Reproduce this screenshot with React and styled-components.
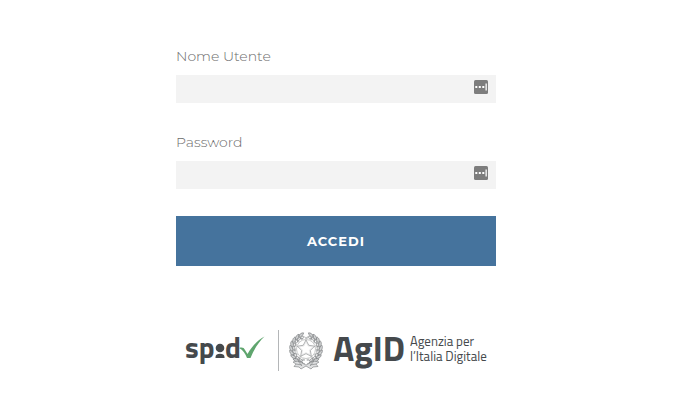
import React from 'react';
import styled, { createGlobalStyle, ThemeProvider } from 'styled-components';

const theme = {
  colors: {
    primary: '#45739d',
    field: '#f3f3f3',
    label: '#6c6c6c',
    ink: '#45494c',
    line: '#b4b6b8',
  },
};

const GlobalStyle = createGlobalStyle`
  * {
    box-sizing: border-box;
  }

  body {
    margin: 0;
    background: #fff;
    font-family: Montserrat, Inter, sans-serif;
  }
`;

const StdPage = styled.main`
  display: flex;
  flex-direction: column;
  align-items: center;
  padding: 46px 17px 28px 16px;
`;

const StdForm = styled.form`
  display: flex;
  flex-direction: column;
  width: 100%;
  max-width: 320px;
`;

const StdField = styled.div`
  margin-bottom: ${(props) => (props.$last ? '27px' : '29px')};
`;

const StdLabel = styled.label`
  display: block;
  margin-bottom: 9px;
  font-size: 14px;
  font-weight: 300;
  line-height: 20px;
  color: ${(props) => props.theme.colors.label};
`;

const StdInputHolder = styled.div`
  display: flex;
  align-items: flex-start;
  height: 28px;
  padding-right: 8px;
  background-color: ${(props) => props.theme.colors.field};
`;

const StdInput = styled.input`
  flex: 1;
  min-width: 0;
  height: 28px;
  padding: 0 8px;
  border: 0;
  background: transparent;
  font: inherit;
  font-size: 14px;
`;

const StdFillIcon = styled.svg`
  width: 14px;
  height: 14px;
  margin-top: 5px;
`;

const StdButton = styled.button`
  height: 50px;
  border: 0;
  background-color: ${(props) => props.theme.colors.primary};
  color: #fff;
  font-family: inherit;
  font-size: 13px;
  font-weight: 700;
  letter-spacing: 1px;
  text-transform: uppercase;
  cursor: pointer;
`;

const StdLogos = styled.footer`
  display: flex;
  align-items: flex-start;
  margin-top: 64px;
  height: 41px;
  color: ${(props) => props.theme.colors.ink};
  font-family: 'Titillium Web', Roboto, sans-serif;
`;

const StdSpid = styled.svg`
  width: 80px;
  height: 41px;
  margin-right: 13px;
  fill: currentColor;
  overflow: visible;
`;

const StdDivider = styled.span`
  width: 1px;
  height: 41px;
  margin-right: 10px;
  background-color: ${(props) => props.theme.colors.line};
`;

const StdEmblem = styled.svg`
  width: 34px;
  height: 39px;
  margin: 1px 10px 0 0;
`;

const StdAcronym = styled.span`
  margin-right: 5px;
  font-size: 35px;
  font-weight: 700;
  line-height: 36px;
`;

const StdAgency = styled.span`
  padding-top: 4px;
  font-size: 13px;
  line-height: 15px;
  white-space: nowrap;
`;

const FillIcon = () => (
  <StdFillIcon viewBox='0 0 14 14' aria-hidden='true'>
    <rect width='14' height='14' rx='1.5' fill='#7d7d7d' />
    <path d='M1.300 6h2v2h-2zM4.800 6h2v2h-2zM8.300 6h2v2h-2zM11.500 3.500h1.300v7h-1.300z' fill='#fff' />
  </StdFillIcon>
);

const Field = ({ id, label, type, last }) => (
  <StdField $last={last}>
    <StdLabel htmlFor={id}>{label}</StdLabel>
    <StdInputHolder>
      <StdInput id={id} name={id} type={type} />
      <FillIcon />
    </StdInputHolder>
  </StdField>
);

const SpidLogo = () => (
  <StdSpid viewBox='0 0 80 41' role='img' aria-label='spid'>
    <g fontFamily="'Titillium Web', Roboto, sans-serif" fontSize='29' fontWeight='700'>
      <text x='0' y='28'>sp</text>
      <text x='40' y='28'>d</text>
    </g>
    <circle cx='35' cy='18' r='4.300' />
    <path d='M30.500 28v-1c0-2.300 2-3.300 4.500-3.300s4.500 1 4.500 3.300v1z' />
    <path
      d='M54 18c3-1 5-.4 6 2l2.500 4C67 16.500 72 10.500 79.500 6.500 73.500 12 69 19.500 65.500 28H62c-1.500-4-4-8-8-10z'
      fill='#5fa56e'
    />
  </StdSpid>
);

const starPoints = (outer, inner) =>
  Array.from({ length: 10 }, (_, i) => {
    const r = i % 2 ? inner : outer;
    const a = (Math.PI * i) / 5 - Math.PI / 2;
    return `${17 + r * Math.cos(a)},${18 + r * Math.sin(a)}`;
  }).join(' ');

const leafAngles = [-160, -143, -126, -109, -92, -75, -58, -41, -24];

const Emblem = () => (
  <StdEmblem viewBox='0 0 34 39' fill='none' stroke='#777a7c' strokeWidth='0.6' aria-hidden='true'>
    {/* gear behind the star */}
    <circle cx='17' cy='18' r='11' stroke='#c0c2c3' strokeWidth='2' strokeDasharray='2.6 2' />
    <circle cx='17' cy='18' r='9.500' fill='#fff' stroke='#a2a4a5' />
    <polygon points={starPoints(9, 4.6)} fill='#fff' />
    <polygon points={starPoints(7.2, 3.7)} fill='#fff' stroke='#c4c6c7' strokeWidth='0.4' />
    {/* olive and oak branches */}
    {[1, -1].map((side) => (
      <g key={side} transform={side === 1 ? undefined : 'matrix(-1 0 0 1 34 0)'}>
        <path d='M13 3C5 6 2 13 3 20s6 10 13 13' />
        {leafAngles.map((angle) => (
          <g key={angle} transform={`translate(17 18) rotate(${angle + 5}) translate(0 -14.500)`}>
            <path d='M-3 1C-1.500-2 1-2.500 3-1.500 1.500.500-.500 2-3 1z' fill='#d0d2d3' />
            <path d='M-2 2.500C-.500 1 1.500 1 2.500 2.500 1 3.500-.500 3.500-2 2.500z' fill='#fff' />
          </g>
        ))}
      </g>
    ))}
    {/* ribbon */}
    <path d='M4 31l5-1 8 4 8-4 5 1-3 2 2 2.500-5 .500-2 2-5-3-5 3-2-2-5-.500L7 33z' fill='#dfe0e1' />
    <path d='M9 30l4 5M25 30l-4 5M7 33l6 1M27 33l-6 1' />
  </StdEmblem>
);

const App = () => (
  <ThemeProvider theme={theme}>
    <GlobalStyle />
    <StdPage>
      <StdForm onSubmit={(e) => e.preventDefault()}>
        <Field id='username' label='Nome Utente' type='text' />
        <Field id='password' label='Password' type='password' last />
        <StdButton type='submit'>Accedi</StdButton>
      </StdForm>

      <StdLogos>
        <SpidLogo />
        <StdDivider />
        <Emblem />
        <StdAcronym>AgID</StdAcronym>
        <StdAgency>
          Agenzia per
          <br />
          l’Italia Digitale
        </StdAgency>
      </StdLogos>
    </StdPage>
  </ThemeProvider>
);

export default App;
